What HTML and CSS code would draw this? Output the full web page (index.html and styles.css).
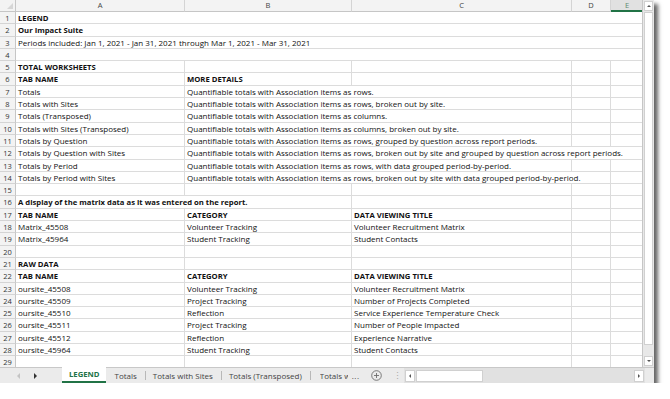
FILE: index.html
```html
<!DOCTYPE html>
<html lang="en">
<head>
  <meta charset="UTF-8" />
  <title>Legend – Our Impact Suite</title>
  <link rel="stylesheet" href="styles.css">
</head>
<body>
  <div class="window">
    <div class="sheet-area">
      <div class="grid">
        <div class="hdr corner"></div>
        <div class="hdr col">A</div>
        <div class="hdr col">B</div>
        <div class="hdr col">C</div>
        <div class="hdr col">D</div>
        <div class="hdr col sel">E</div>

        <div class="rn">1</div><div class="c span5 b">LEGEND</div>
        <div class="rn">2</div><div class="c span5 b">Our Impact Suite</div>
        <div class="rn">3</div><div class="c span5">Periods included: Jan 1, 2021 - Jan 31, 2021 through Mar 1, 2021 - Mar 31, 2021</div>
        <div class="rn">4</div><div class="c span5"></div>

        <div class="rn">5</div><div class="c b">TOTAL WORKSHEETS</div><div class="c"></div><div class="c"></div><div class="c"></div><div class="c"></div>
        <div class="rn">6</div><div class="c b">TAB NAME</div><div class="c b">MORE DETAILS</div><div class="c"></div><div class="c"></div><div class="c"></div>
        <div class="rn">7</div><div class="c">Totals</div><div class="c span2">Quantifiable totals with Association items as rows.</div><div class="c"></div><div class="c"></div>
        <div class="rn">8</div><div class="c">Totals with Sites</div><div class="c span2">Quantifiable totals with Association items as rows, broken out by site.</div><div class="c"></div><div class="c"></div>
        <div class="rn">9</div><div class="c">Totals (Transposed)</div><div class="c span2">Quantifiable totals with Association items as columns.</div><div class="c"></div><div class="c"></div>
        <div class="rn">10</div><div class="c">Totals with Sites (Transposed)</div><div class="c span2">Quantifiable totals with Association items as columns, broken out by site.</div><div class="c"></div><div class="c"></div>
        <div class="rn">11</div><div class="c">Totals by Question</div><div class="c span2">Quantifiable totals with Association items as rows, grouped by question across report periods.</div><div class="c"></div><div class="c"></div>
        <div class="rn">12</div><div class="c">Totals by Question with Sites</div><div class="c span4">Quantifiable totals with Association items as rows, broken out by site and grouped by question across report periods.</div>
        <div class="rn">13</div><div class="c">Totals by Period</div><div class="c span2">Quantifiable totals with Association items as rows, with data grouped period-by-period.</div><div class="c"></div><div class="c"></div>
        <div class="rn">14</div><div class="c">Totals by Period with Sites</div><div class="c span3">Quantifiable totals with Association items as rows, broken out by site with data grouped period-by-period.</div><div class="c"></div>
        <div class="rn">15</div><div class="c"></div><div class="c"></div><div class="c"></div><div class="c"></div><div class="c"></div>

        <div class="rn">16</div><div class="c span2 b">A display of the matrix data as it was entered on the report.</div><div class="c"></div><div class="c"></div><div class="c"></div>
        <div class="rn">17</div><div class="c b">TAB NAME</div><div class="c b">CATEGORY</div><div class="c b">DATA VIEWING TITLE</div><div class="c"></div><div class="c"></div>
        <div class="rn">18</div><div class="c">Matrix_45508</div><div class="c">Volunteer Tracking</div><div class="c">Volunteer Recruitment Matrix</div><div class="c"></div><div class="c"></div>
        <div class="rn">19</div><div class="c">Matrix_45964</div><div class="c">Student Tracking</div><div class="c">Student Contacts</div><div class="c"></div><div class="c"></div>
        <div class="rn">20</div><div class="c"></div><div class="c"></div><div class="c"></div><div class="c"></div><div class="c"></div>

        <div class="rn">21</div><div class="c b">RAW DATA</div><div class="c"></div><div class="c"></div><div class="c"></div><div class="c"></div>
        <div class="rn">22</div><div class="c b">TAB NAME</div><div class="c b">CATEGORY</div><div class="c b">DATA VIEWING TITLE</div><div class="c"></div><div class="c"></div>
        <div class="rn">23</div><div class="c">oursite_45508</div><div class="c">Volunteer Tracking</div><div class="c">Volunteer Recruitment Matrix</div><div class="c"></div><div class="c"></div>
        <div class="rn">24</div><div class="c">oursite_45509</div><div class="c">Project Tracking</div><div class="c">Number of Projects Completed</div><div class="c"></div><div class="c"></div>
        <div class="rn">25</div><div class="c">oursite_45510</div><div class="c">Reflection</div><div class="c">Service Experience Temperature Check</div><div class="c"></div><div class="c"></div>
        <div class="rn">26</div><div class="c">oursite_45511</div><div class="c">Project Tracking</div><div class="c">Number of People Impacted</div><div class="c"></div><div class="c"></div>
        <div class="rn">27</div><div class="c">oursite_45512</div><div class="c">Reflection</div><div class="c">Experience Narrative</div><div class="c"></div><div class="c"></div>
        <div class="rn">28</div><div class="c">oursite_45964</div><div class="c">Student Tracking</div><div class="c">Student Contacts</div><div class="c"></div><div class="c"></div>
        <div class="rn">29</div><div class="c"></div><div class="c"></div><div class="c"></div><div class="c"></div><div class="c"></div>
      </div>

      <div class="vscroll">
        <div class="sb-btn"><span class="tri up"></span></div>
        <div class="vthumb"></div>
        <div class="vtrack"></div>
        <div class="sb-btn"><span class="tri down"></span></div>
      </div>
    </div>

    <div class="tabbar">
      <div class="tab-nav">
        <span class="tri left dim"></span>
        <span class="tri right"></span>
      </div>
      <div class="tab active">LEGEND</div>
      <div class="tab">Totals</div>
      <div class="tab">Totals with Sites</div>
      <div class="tab">Totals (Transposed)</div>
      <div class="tab cut"><span class="cut-text">Totals w</span><span class="more">...</span></div>
      <div class="add">
        <svg width="11" height="11" viewBox="0 0 11 11">
          <circle cx="5.5" cy="5.5" r="4.8" fill="none" stroke="#6d6d6d" stroke-width="0.9"/>
          <path d="M5.5 3v5M3 5.5h5" stroke="#6d6d6d" stroke-width="0.9"/>
        </svg>
      </div>
      <div class="splitter">⋮</div>
      <div class="hscroll">
        <div class="sb-btn h"><span class="tri left"></span></div>
        <div class="hthumb"></div>
        <div class="htrack"></div>
        <div class="sb-btn h"><span class="tri right"></span></div>
      </div>
    </div>
  </div>
</body>
</html>
```
FILE: styles.css
```css
body {
  margin: 0;
  background: #fff;
  font-family: "Open Sans", "Liberation Sans", sans-serif;
  font-size: 8px;
  color: #111;
}
.window {
  width: 654px;
  height: 383px;
  display: flex;
  flex-direction: column;
  background: #fff;
  box-shadow: 4px 4px 4px rgba(0, 0, 0, 0.6);
  overflow: hidden;
}
.sheet-area {
  display: flex;
  height: 367px;
}
.grid {
  width: 643px;
  overflow: hidden;
  display: grid;
  grid-template-columns: 16px 169px 167px 220px 39px 32px;
  grid-template-rows: 12px;
  grid-auto-rows: 12.3px;
  align-content: start;
}
.hdr {
  background: #f3f3f3;
  border-right: 1px solid #d4d4d4;
  border-bottom: 1px solid #c6c6c6;
  color: #444;
  text-align: center;
  line-height: 11px;
  font-size: 7.5px;
}
.corner {
  position: relative;
  border-right-color: #c6c6c6;
}
.corner::after {
  content: "";
  position: absolute;
  right: 2px;
  bottom: 2px;
  border-left: 6px solid transparent;
  border-bottom: 6px solid #d6d6d6;
}
.hdr.sel {
  background: #e1e1e1;
  color: #5d8a70;
  border-bottom: 2px solid #217346;
  border-right: none;
}
.rn {
  background: #f3f3f3;
  border-right: 1px solid #c6c6c6;
  border-bottom: 1px solid #d4d4d4;
  color: #333;
  text-align: center;
  line-height: 12.3px;
  font-size: 7.5px;
}
.c {
  border-right: 1px solid #dcdcdc;
  border-bottom: 1px solid #dcdcdc;
  padding-left: 2px;
  line-height: 12.3px;
  white-space: nowrap;
  overflow: hidden;
}
.b {
  font-weight: bold;
  font-size: 7.7px;
}
.span2 { grid-column: span 2; }
.span3 { grid-column: span 3; }
.span4 { grid-column: span 4; }
.span5 { grid-column: span 5; }

/* scrollbars */
.vscroll {
  width: 11px;
  display: flex;
  flex-direction: column;
  background: #e8e8e8;
  border-left: 1px solid #c6c6c6;
}
.sb-btn {
  height: 10px;
  margin: 1px;
  background: #fff;
  border: 1px solid #d0d0d0;
  box-sizing: border-box;
  display: flex;
  align-items: center;
  justify-content: center;
}
.vthumb {
  height: 331px;
  margin: 0 1px;
  background: #fff;
  border: 1px solid #d0d0d0;
}
.vtrack { flex: 1; }
.tri {
  width: 0;
  height: 0;
}
.tri.up {
  border-left: 2px solid transparent;
  border-right: 2px solid transparent;
  border-bottom: 2px solid #555;
}
.tri.down {
  border-left: 2px solid transparent;
  border-right: 2px solid transparent;
  border-top: 2px solid #555;
}
.tri.left {
  border-top: 2px solid transparent;
  border-bottom: 2px solid transparent;
  border-right: 2px solid #555;
}
.tri.right {
  border-top: 2px solid transparent;
  border-bottom: 2px solid transparent;
  border-left: 2px solid #555;
}

/* sheet tabs */
.tabbar {
  height: 16px;
  display: flex;
  align-items: stretch;
  background: #ebebeb;
  border-top: 1px solid #c8c8c8;
  box-sizing: border-box;
  color: #444;
}
.tab-nav {
  width: 62px;
  display: flex;
  align-items: center;
  gap: 14px;
  padding-left: 17px;
  box-sizing: border-box;
}
.tab-nav .tri { border-width: 3px; }
.tab-nav .tri.left { border-right-color: #c4c4c4; }
.tab-nav .tri.right { border-left-color: #333; }
.tab {
  display: flex;
  align-items: center;
  padding: 0 8px;
  line-height: 14px;
  position: relative;
}
.tab + .tab::before {
  content: "";
  position: absolute;
  left: 0;
  top: 3px;
  height: 9px;
  border-left: 1px solid #b8b8b8;
}
.tab.active {
  background: #fff;
  color: #217346;
  font-weight: bold;
  font-size: 7.7px;
  padding: 0 7px;
  border-bottom: 2px solid #217346;
  margin-top: -1px;
}
.tab.active + .tab::before { display: none; }
.tab.cut {
  padding-left: 10px;
  padding-right: 4px;
}
.cut-text {
  display: inline-block;
  width: 28px;
  overflow: hidden;
  white-space: nowrap;
}
.more {
  margin-left: 4px;
  letter-spacing: 0.5px;
}
.add {
  display: flex;
  align-items: center;
  padding-left: 7px;
}
.splitter {
  display: flex;
  align-items: center;
  padding-left: 11px;
  width: 11px;
  color: #aaa;
  font-size: 9px;
}
.hscroll {
  flex: 0 0 241px;
  display: flex;
  align-items: center;
  background: #e1e1e1;
}
.sb-btn.h {
  width: 10px;
  height: 12px;
}
.hthumb {
  width: 67px;
  height: 12px;
  background: #fff;
  border: 1px solid #d0d0d0;
  box-sizing: border-box;
}
.htrack { flex: 1; }
```
